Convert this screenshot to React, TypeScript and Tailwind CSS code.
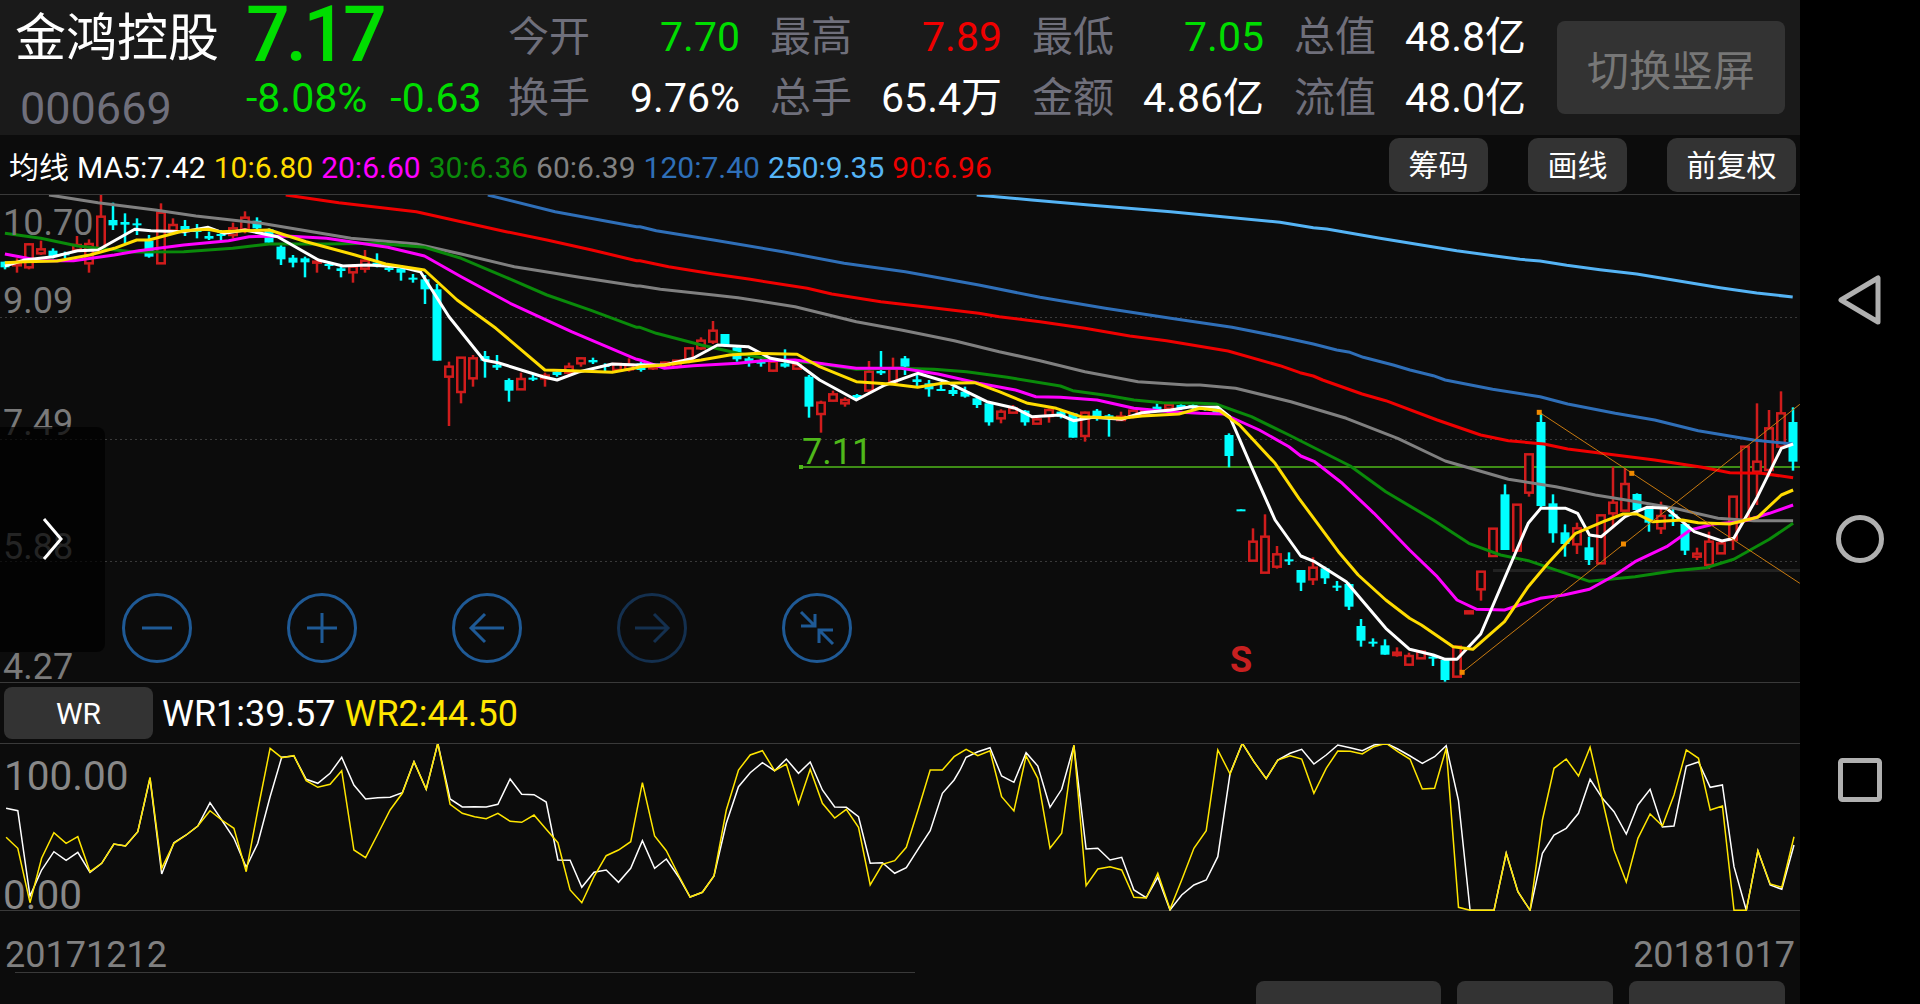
type Pt = [number, number];
type Candle = [string, number, number, number, number];

const pts = (a: number[], f: (x: number, y: number) => Pt) => {
  const out: Pt[] = [];
  for (let i = 0; i < a.length; i += 2) out.push(f(a[i], a[i + 1]));
  return out;
};
// readings were taken from several crops of the chart, each has its own scale
const z3 = (a: number[]) => pts(a, (x, y) => [x / 2.45, 190 + y / 3]);
const z4 = (a: number[]) => pts(a, (x, y) => [640 + x / 2.45, 190 + y / 3]).filter((p) => p[0] < 1200);
const z5 = (a: number[]) => pts(a, (x, y) => [1200 + x / 2.529, 380 + y / 3]);
const z6 = (a: number[]) => pts(a, (x, y) => [x / 1.633, 680 + y / 3]);
const z7 = (a: number[]) => pts(a, (x, y) => [960 + x / 1.633, 680 + y / 3]);
const z8 = (a: number[]) => pts(a, (x, y) => [1280 + x / 3, 190 + y / 3]);
const str = (p: Pt[]) => p.map((q) => `${q[0].toFixed(1)},${q[1].toFixed(1)}`).join(" ");

const ma250: Pt[] = [
  ...z4([825, 15, 960, 30, 1100, 45, 1300, 65]),
  ...z8([0, 97, 100, 113, 140, 117, 300, 145, 530, 182, 640, 197, 720, 208, 780, 213, 860, 226, 960, 239, 1070, 252, 1320, 293, 1430, 309, 1538, 321]),
];
const ma120 = [
  ...z3([1195, 15, 1360, 65, 1560, 110]),
  ...z4([0, 110, 40, 122, 180, 150, 350, 185, 500, 220, 650, 245, 830, 285, 980, 322, 1140, 355, 1300, 385]),
  [1232, 327.3] as Pt,
  ...z8([0, 440, 100, 462, 170, 480, 210, 487, 250, 502, 340, 525, 390, 540, 460, 557]),
  ...z5([620, 0, 740, 28, 860, 50, 930, 72, 1050, 100, 1150, 120, 1260, 152, 1400, 180, 1500, 192]),
];
const ma90 = [
  ...z3([700, 15, 830, 38, 1020, 65, 1130, 95, 1240, 125, 1340, 150, 1450, 180, 1560, 212]),
  ...z4([0, 212, 70, 230, 180, 252, 270, 268, 410, 295, 470, 312, 590, 335, 680, 348, 830, 370, 880, 380, 980, 395, 1090, 415, 1200, 438, 1290, 452]),
  [1228, 351] as Pt,
  ...z8([0, 527, 60, 548, 100, 558]),
  ...z5([310, 0, 410, 42, 470, 62, 600, 120, 710, 165, 780, 182, 870, 192, 930, 207, 1030, 222, 1150, 240, 1270, 262, 1340, 278, 1420, 280, 1500, 293]),
];
const ma60 = [
  ...z3([120, 15, 240, 38, 380, 60, 480, 78, 640, 100, 860, 145, 1020, 162, 1130, 192, 1260, 230, 1420, 262, 1560, 288]),
  ...z4([0, 288, 50, 298, 180, 315, 240, 323, 380, 350, 530, 395, 640, 420, 770, 452, 880, 485, 980, 512, 1090, 545, 1220, 575, 1340, 585]),
  ...z5([0, 15, 90, 25, 230, 65, 370, 115, 500, 175, 620, 243, 780, 298, 900, 320, 1000, 345, 1120, 368, 1200, 385, 1310, 415, 1400, 422, 1500, 422]),
];
const ma30 = [
  ...z3([12, 130, 100, 145, 190, 168, 330, 186, 450, 185, 570, 175, 660, 162, 800, 162, 920, 160, 1040, 172, 1130, 205, 1240, 262, 1340, 315, 1450, 362, 1560, 412]),
  ...z4([0, 412, 40, 430, 150, 465, 240, 490, 330, 510, 430, 520, 530, 538, 630, 535, 720, 538, 800, 545, 900, 562, 1030, 588, 1060, 602, 1150, 617, 1210, 630, 1280, 638]),
  ...z5([0, 70, 40, 72, 130, 110, 225, 165, 380, 258, 470, 335, 590, 420, 680, 490, 760, 525, 830, 542, 985, 604, 1100, 590, 1200, 572, 1280, 563, 1350, 538, 1440, 478, 1500, 430]),
];
const ma20 = [
  ...z3([12, 192, 100, 212, 180, 212, 280, 195, 340, 182, 450, 165, 560, 152, 610, 140, 700, 138, 800, 145, 950, 172, 1040, 198, 1130, 260, 1250, 340, 1400, 425, 1560, 508]),
  ...z4([0, 510, 60, 535, 130, 527, 240, 520, 300, 512, 380, 510, 530, 535, 640, 535, 730, 552, 830, 580, 920, 600, 970, 620, 1030, 622, 1120, 630, 1210, 655, 1300, 665]),
  ...z5([0, 100, 60, 102, 150, 150, 225, 200, 255, 228, 290, 245, 360, 310, 440, 400, 530, 510, 600, 590, 650, 660, 700, 688, 770, 690, 860, 655, 920, 645, 985, 628, 1050, 585, 1100, 545, 1180, 500, 1240, 450, 1300, 432, 1370, 425, 1440, 400, 1500, 375]),
];
const ma10 = [
  ...z3([12, 218, 60, 215, 140, 213, 220, 195, 280, 175, 335, 150, 365, 150, 450, 122, 510, 118, 540, 125, 600, 122, 660, 120, 750, 155, 870, 195, 945, 222, 1040, 240, 1120, 330, 1215, 415, 1335, 540, 1400, 542, 1500, 547, 1560, 533]),
  ...z4([0, 530, 60, 525, 150, 510, 220, 495, 290, 490, 385, 493, 440, 530, 530, 575, 620, 583, 680, 592, 740, 580, 820, 578, 880, 605, 950, 640, 1020, 655, 1080, 680, 1180, 685, 1230, 678, 1320, 672]),
  ...z5([0, 85, 50, 92, 100, 135, 190, 250, 250, 355, 350, 515, 400, 585, 470, 660, 530, 715, 560, 735, 640, 800, 690, 808, 770, 725, 830, 620, 880, 550, 950, 460, 1020, 425, 1070, 402, 1105, 402, 1145, 425, 1220, 420, 1260, 428, 1340, 432, 1410, 412, 1470, 345, 1500, 330]),
];
const ma5 = [
  ...z3([12, 228, 60, 210, 130, 200, 190, 182, 240, 180, 330, 118, 370, 122, 450, 125, 510, 112, 550, 130, 600, 120, 680, 140, 780, 210, 840, 228, 900, 225, 980, 230, 1030, 245, 1100, 380, 1185, 510, 1220, 518, 1330, 560, 1365, 570, 1420, 545, 1500, 522, 1560, 525]),
  ...z4([0, 525, 60, 525, 130, 505, 190, 465, 265, 470, 320, 505, 385, 520, 440, 570, 530, 630, 600, 585, 680, 550, 750, 575, 850, 635, 920, 655, 960, 680, 1030, 675, 1062, 692, 1110, 682, 1180, 688, 1230, 668, 1300, 660, 1350, 650]),
  ...z5([0, 82, 45, 82, 75, 110, 130, 260, 190, 420, 255, 528, 290, 545, 370, 605, 470, 745, 530, 808, 590, 825, 620, 838, 650, 838, 710, 762, 790, 540, 830, 430, 862, 385, 925, 385, 955, 400, 985, 465, 1015, 470, 1075, 410, 1130, 382, 1180, 385, 1250, 455, 1320, 483, 1350, 475, 1410, 350, 1470, 205, 1500, 192]),
];

// kind, body top, body bottom, high, low (y as read off the crops of 190 + y/3)
const candlesA: Candle[] = [
  ["c",215,232,215,238],["r",222,226,205,248],["r",163,232,160,238],["r",178,190,152,195],["c",182,198,175,205],["c",190,195,185,205],["r",165,180,138,185],["r",162,220,148,248],["r",80,175,15,180],["c",90,106,38,120],
  ["c",96,104,70,160],["c",100,102,85,135],["c",152,200,135,203],["r",68,220,40,220],["r",105,122,85,130],["c",108,122,90,138],["c",120,125,102,145],["c",138,146,125,150],["c",132,134,120,152],["r",115,135,98,145],
  ["r",83,118,64,130],["c",92,115,82,118],["c",118,158,115,160],["c",170,208,160,225],["c",203,218,195,232],["c",205,217,200,262],["r",215,218,205,248],["c",222,228,215,238],["c",235,243,230,262],["r",230,247,222,278],
  ["r",212,236,180,248],["c",218,228,190,232],["c",233,240,225,245],["c",235,248,228,272],["c",263,266,252,278],["c",268,298,255,342],["c",298,512,282,512],["r",530,560,515,708],["r",503,606,503,640],["r",505,565,495,590],
  ["c",498,512,483,563],["c",525,533,495,540],["c",570,602,565,635],["r",567,598,548,600],["c",563,567,555,573],["r",557,565,548,590],["c",545,555,540,560],["r",530,548,518,560],["r",505,520,502,530],["c",510,517,503,522],
  ["c",525,530,520,543],["r",522,540,520,545],["r",525,538,505,545],["c",520,540,515,545],["r",525,535,520,540],["r",518,528,515,532],["r",512,530,510,535],["r",475,510,472,520],["r",452,475,442,480],["r",422,455,393,462],
  ["c",432,468,432,470],["c",472,508,470,515],["c",505,513,500,530],["c",515,520,505,530],["r",515,542,510,545],["c",520,530,478,533],["r",525,536,515,538],["c",560,650,555,683],["r",638,672,632,728],["r",613,632,602,634],
  ["r",630,640,622,650],["c",615,625,612,630],["r",545,602,513,605],["c",543,550,483,555],["r",535,575,503,580],["c",505,530,498,555],["c",568,576,550,590],["c",580,598,570,620],["c",597,600,578,603],["c",600,612,590,618],
  ["c",605,620,590,623],["c",625,645,620,654],["c",640,697,638,707],["r",665,685,658,700],["r",655,668,645,670],["c",662,697,660,707],["r",688,701,675,703],["r",660,678,655,698],["c",665,680,660,685],["c",670,743,668,743],
  ["r",668,738,665,755],["c",662,678,657,692],["c",676,680,672,740],["r",680,690,665,693],["r",662,680,660,685],["r",660,672,655,675],["c",650,660,640,662],["r",645,656,640,660],["c",645,655,640,660],["c",645,652,640,662],
  ["c",652,660,650,662],["c",655,668,652,670],
];
// from candle 102 on, read off the right crop (380 + y/3)
const candlesB: Candle[] = [
  ["c",165,228,160,262],["c",388,392,388,392],["r",485,542,445,542],["r",470,578,403,578],["r",523,560,498,566],["c",538,544,517,555],["c",570,608,570,633],["r",563,598,532,615],["c",565,595,560,612],["c",617,623,603,633],
  ["c",612,680,608,690],["c",738,782,717,800],["c",785,790,775,800],["c",796,824,778,824],["r",818,825,802,830],["r",828,854,818,857],["r",815,835,812,836],["c",830,834,828,858],["c",840,900,838,905],["r",800,890,798,892],
  ["r",694,700,694,700],["r",575,628,575,662],["r",446,528,446,530],["c",343,510,313,510],["r",374,512,374,512],["r",223,338,223,350],["c",126,378,100,385],["c",370,460,343,488],["c",457,492,433,530],["r",445,493,428,522],
  ["c",502,540,470,555],["r",406,550,406,552],["r",368,400,260,445],["r",312,392,265,395],["c",342,390,340,395],["c",385,428,382,455],["r",408,445,365,462],["c",403,410,385,438],["c",432,512,430,525],["r",521,530,503,540],
  ["r",485,555,455,567],["r",490,520,485,522],["r",350,480,350,510],["r",200,420,200,420],["r",245,275,70,375],["r",145,270,90,290],["r",100,200,34,200],["c",126,245,82,272],
];
const candles = [
  ...candlesA.map((c) => ({ c, y: (v: number) => 190 + v / 3 })),
  ...candlesB.map((c) => ({ c, y: (v: number) => 380 + v / 3 })),
];

const wrYellow = [
  ...z6([10,472,29,505,49,668,68,535,88,458,108,490,127,470,147,575,166,550,186,492,205,498,225,455,245,292,264,565,284,490,304,465,323,438,343,392,362,420,382,445,402,575,421,390,441,205,460,233,480,227,500,302,519,322,539,313,558,272,578,510,597,533,617,462,637,390,657,340,676,245,696,328,715,190,735,373,755,400,775,410,794,416,813,400,833,424,852,427,872,405,892,448,911,488,931,630,950,668,970,590,990,527,1010,510,1030,485,1049,308,1069,468,1088,512,1108,585,1127,651,1147,637,1166,588,1186,390,1206,270,1225,225,1245,212,1265,272,1284,252,1304,372,1323,268,1343,370,1363,414,1382,388,1402,442,1421,615,1441,553,1461,542,1480,502,1500,385,1519,270,1539,270,1558,230]),
  ...z7([10,208,29,227,49,212,68,350,88,393,108,228,127,295,147,505,166,460,186,195,206,617,225,567,245,560,264,570,284,652,304,654,323,580,343,688,362,600,382,505,402,452,421,210,441,282,461,190,480,245,500,296,519,240,539,227,558,237,578,340,598,265,617,213,637,214,657,222,676,200,696,190,715,215,735,238,755,327,775,325,794,205,814,682,833,691,853,691,872,691,892,520,911,635,931,691,951,420,970,265,990,237,1010,288,1029,202,1049,360,1068,510,1088,606,1107,475,1127,402,1147,438,1166,345,1186,210,1206,235,1225,390,1245,378,1264,691,1284,691,1303,512,1323,612,1342,622,1362,470]),
];
const wrWhite = [
  ...z6([10,385,29,392,49,648,68,570,88,515,108,541,127,517,147,577,166,550,186,492,205,498,225,455,245,295,264,582,284,488,304,465,323,438,343,368,362,420,382,475,402,562,421,490,441,350,460,232,480,228,500,298,519,310,539,280,558,232,578,315,597,357,617,353,637,352,657,338,676,245,696,328,715,190,735,357,755,381,775,380,794,381,813,373,833,297,852,343,872,344,892,366,911,540,931,541,950,622,970,577,990,570,1010,607,1030,565,1049,482,1069,565,1088,537,1108,590,1127,651,1147,637,1166,588,1186,430,1206,320,1225,278,1245,248,1265,272,1284,237,1304,280,1323,246,1343,330,1363,381,1382,382,1402,410,1421,550,1441,548,1461,580,1480,563,1500,505,1519,452,1539,340,1558,300]),
  ...z7([0,270,10,232,29,215,49,203,68,288,88,307,108,218,127,258,147,382,166,328,186,197,206,507,225,505,245,540,264,532,284,630,304,653,323,592,343,690,362,645,382,615,402,600,421,530,441,280,461,190,480,245,500,296,519,240,539,220,558,208,578,252,598,225,617,195,637,203,657,212,676,195,696,190,715,207,735,228,755,250,775,230,794,197,814,362,833,691,853,691,872,691,892,520,911,635,931,691,951,520,970,465,990,445,1010,400,1029,298,1049,355,1068,395,1088,462,1107,375,1127,328,1147,441,1166,438,1186,258,1206,246,1225,322,1245,315,1264,560,1284,691,1303,512,1323,615,1342,628,1362,495]),
];

const maLines: [Pt[], string][] = [
  [ma250, "#55b4f5"],
  [ma120, "#2f6fb8"],
  [ma90, "#f00000"],
  [ma60, "#808080"],
  [ma30, "#0a8a0a"],
  [ma20, "#ff00ff"],
  [ma5, "#ffffff"],
  [ma10, "#ffdc00"],
];

const orange = "#c87a10";
const handles = z5([858, 97, 1092, 280, 663, 877, 1071, 492]);

function MainChart() {
  return (
    <svg viewBox="0 195 1800 487" width={1800} height={487} className="block">
      {[317, 439, 561].map((y) => (
        <line key={y} x1={0} x2={1800} y1={y + 0.5} y2={y + 0.5} stroke="#3a3a3a" strokeDasharray="2 3" />
      ))}
      <rect x={1493} y={569} width={307} height={3} fill="#222222" />
      <line x1={801} x2={1800} y1={467} y2={467} stroke="#4fb81a" strokeWidth={1.5} />
      <rect x={799} y={465} width={4} height={4} fill="#4fb81a" />
      {candles.map(({ c, y }, i) => {
        const [kind, top, bot, hi, lo] = c;
        const x = 5 + 12 * i;
        const col = kind === "r" ? "#d01c1c" : "#00ffff";
        return (
          <g key={i}>
            <line x1={x} x2={x} y1={y(hi)} y2={y(lo)} stroke={col} strokeWidth={2.5} />
            {kind === "r" ? (
              <rect x={x - 3.75} y={y(top)} width={7.5} height={Math.max(y(bot) - y(top), 1)} fill="#0c0c0c" stroke={col} strokeWidth={2.5} />
            ) : (
              <rect x={x - 4.5} y={y(top)} width={9} height={Math.max(y(bot) - y(top), 2)} fill={col} />
            )}
          </g>
        );
      })}
      {maLines.map(([p, col]) => (
        <polyline key={col} points={str(p)} fill="none" stroke={col} strokeWidth={3} strokeLinejoin="round" />
      ))}
      <polyline points={str(z5([858, 97, 1517, 610]))} fill="none" stroke={orange} strokeWidth={1} />
      <polyline points={str(z5([663, 877, 1517, 73]))} fill="none" stroke={orange} strokeWidth={1} />
      {handles.map((p, i) => (
        <rect key={i} x={p[0] - 2.5} y={p[1] - 2.5} width={5} height={5} fill="#f08a00" />
      ))}
    </svg>
  );
}

function WrChart() {
  return (
    <svg viewBox="0 744 1800 167" width={1800} height={167} className="block">
      <polyline points={str(wrWhite)} fill="none" stroke="#ffffff" strokeWidth={1.5} />
      <polyline points={str(wrYellow)} fill="none" stroke="#ffe600" strokeWidth={1.5} />
    </svg>
  );
}

function RoundBtn({ dim, children }: { dim?: boolean; children: React.ReactNode }) {
  const col = dim ? "#14304f" : "#1f5a96";
  return (
    <svg viewBox="-35 -35 70 70" width={70} height={70} fill="none" stroke={col} strokeWidth={3}>
      <circle r={33.5} />
      {children}
    </svg>
  );
}

function Metric({ label, value, color }: { label: string; value: string; color: string }) {
  return (
    <div className="flex items-center justify-between">
      <span className="text-[#6f6f7b]">{label}</span>
      <span className={color}>{value}</span>
    </div>
  );
}

const green = "text-[#00dd00]";
const grid = "text-[41px] leading-[61px] grid grid-cols-[232px_232px_232px_232px] gap-x-[30px]";

export default function App() {
  return (
    <div className="flex w-[1920px] h-[1004px] overflow-hidden bg-black text-white font-['Roboto','Noto_Sans_CJK_SC',sans-serif]">
      <div className="w-[1800px] flex flex-col bg-[#0c0c0c]">
        <div className="h-[135px] flex bg-[#1a1a1a]">
          <div className="w-[245px] pl-[15px]">
            <div className="text-[51px] leading-[50px] mt-[14px]">金鸿控股</div>
            <div className="text-[45px] leading-[50px] mt-[20px] pl-[5px] text-[#6f6f7b]">000669</div>
          </div>
          <div className="w-[263px]">
            <div className="text-[77px] leading-[70px] tracking-[-4px] font-medium text-[#00dd00] pl-[1px]">7.17</div>
            <div className={`flex gap-[23px] text-[41px] leading-[50px] mt-[3px] pl-[1px] ${green}`}>
              <span>-8.08%</span>
              <span>-0.63</span>
            </div>
          </div>
          <div className={`${grid} pt-[7px] h-fit`}>
            <Metric label="今开" value="7.70" color={green} />
            <Metric label="最高" value="7.89" color="text-[#f00000]" />
            <Metric label="最低" value="7.05" color={green} />
            <Metric label="总值" value="48.8亿" color="text-white" />
            <Metric label="换手" value="9.76%" color="text-white" />
            <Metric label="总手" value="65.4万" color="text-white" />
            <Metric label="金额" value="4.86亿" color="text-white" />
            <Metric label="流值" value="48.0亿" color="text-white" />
          </div>
          <div className="ml-[31px] mt-[21px] w-[228px] h-[93px] pt-[7px] flex items-center justify-center rounded-lg bg-[#333333] text-[42px] text-[#777777]">
            切换竖屏
          </div>
        </div>

        <div className="h-[60px] flex items-center justify-between border-b border-[#3a3a3a] pl-[9px] pr-[4px]">
          <div className="flex gap-[8px] text-[30px] pt-[5px]">
            <span>均线</span>
            <span>MA5:7.42</span>
            <span className="text-[#ffdc00]">10:6.80</span>
            <span className="text-[#ff00ff]">20:6.60</span>
            <span className="text-[#0a8a0a]">30:6.36</span>
            <span className="text-[#808080]">60:6.39</span>
            <span className="text-[#2f6fb8]">120:7.40</span>
            <span className="text-[#55b4f5]">250:9.35</span>
            <span className="text-[#f00000]">90:6.96</span>
          </div>
          <div className="flex gap-[40px] text-[30px]">
            <div className="w-[99px] h-[54px] pt-[1px] flex items-center justify-center rounded-[10px] bg-[#333333]">筹码</div>
            <div className="w-[99px] h-[54px] pt-[1px] flex items-center justify-center rounded-[10px] bg-[#333333]">画线</div>
            <div className="w-[129px] h-[54px] pt-[1px] flex items-center justify-center rounded-[10px] bg-[#333333]">前复权</div>
          </div>
        </div>

        <div className="relative h-[487px]">
          <MainChart />
          <div className="absolute inset-0 text-[36px] leading-none text-[#7a7a7a]">
            <span className="absolute left-[3px] top-[10px]">10.70</span>
            <span className="absolute left-[3px] top-[88px]">9.09</span>
            <span className="absolute left-[3px] top-[210px]">7.49</span>
            <span className="absolute left-[3px] top-[334px]">5.88</span>
            <span className="absolute left-[3px] top-[454px]">4.27</span>
          </div>
          <span className="absolute left-[802px] top-[239px] text-[36px] leading-none text-[#4fb81a]">7.11</span>
          <span className="absolute left-[1230px] top-[447px] text-[36px] leading-none font-bold text-[#c82020]">S</span>
          <div className="absolute left-0 top-[232px] w-[105px] h-[225px] flex items-center justify-center rounded-r-lg bg-black/70">
            <svg width={24} height={44} viewBox="0 0 24 44" fill="none" stroke="#ffffff" strokeWidth={3} className="-mt-[2px] ml-[1px]">
              <path d="M3 2L20 22L3 42" />
            </svg>
          </div>
          <div className="absolute left-[122px] top-[398px] flex gap-[95px]">
            <RoundBtn>
              <path d="M-15 0H15" />
            </RoundBtn>
            <RoundBtn>
              <path d="M-15 0H15M0 -15V15" />
            </RoundBtn>
            <RoundBtn>
              <path d="M-16 0H17M-2 -14L-16 0L-2 14" />
            </RoundBtn>
            <RoundBtn dim>
              <path d="M-17 0H16M2 -14L16 0L2 14" />
            </RoundBtn>
            <RoundBtn>
              <path d="M-16 -16L-2 -2M-16 -2H-2V-14M16 16L2 2M2 15V2H16" />
            </RoundBtn>
          </div>
        </div>

        <div className="h-[62px] flex items-center gap-[9px] border-t border-b border-[#3a3a3a] pl-[4px] text-[36px]">
          <div className="w-[149px] h-[52px] flex items-center justify-center rounded-lg bg-[#333333] text-[30px]">WR</div>
          <div className="flex gap-[9px] pt-[1px]">
            <span>WR1:39.57</span>
            <span className="text-[#ffe600]">WR2:44.50</span>
          </div>
        </div>

        <div className="relative h-[167px] border-b border-[#3a3a3a]">
          <WrChart />
          <span className="absolute left-[4px] top-[12px] text-[40.5px] leading-none text-[#888888]">100.00</span>
          <span className="absolute left-[3px] top-[131px] text-[40.5px] leading-none text-[#888888]">0.00</span>
        </div>

        <div className="h-[61px] flex items-center justify-between px-[5px] text-[36px] text-[#808080] pt-[26px]">
          <span>20171212</span>
          <span>20181017</span>
        </div>
        <div className="h-px w-[900px] ml-[15px] bg-[#3a3a3a]" />
        <div className="mt-[8px] flex justify-end gap-[16px] pr-[15px]">
          <div className="w-[185px] h-[23px] rounded-t-lg bg-[#333333]" />
          <div className="w-[156px] h-[23px] rounded-t-lg bg-[#333333]" />
          <div className="w-[156px] h-[23px] rounded-t-lg bg-[#333333]" />
        </div>
      </div>

      <div className="w-[120px] flex flex-col items-center pt-[275px]">
        <svg width={44} height={50} viewBox="0 0 44 50" fill="none" stroke="#b0b0b0" strokeWidth={5} strokeLinejoin="round">
          <path d="M40 3V47L3 25Z" />
        </svg>
        <svg width={48} height={48} viewBox="0 0 48 48" fill="none" stroke="#b0b0b0" strokeWidth={5} className="mt-[190px]">
          <circle cx={24} cy={24} r={21.5} />
        </svg>
        <svg width={44} height={44} viewBox="0 0 44 44" fill="none" stroke="#b0b0b0" strokeWidth={5} className="mt-[195px]">
          <rect x={2.5} y={2.5} width={39} height={39} rx={2} />
        </svg>
      </div>
    </div>
  );
}
